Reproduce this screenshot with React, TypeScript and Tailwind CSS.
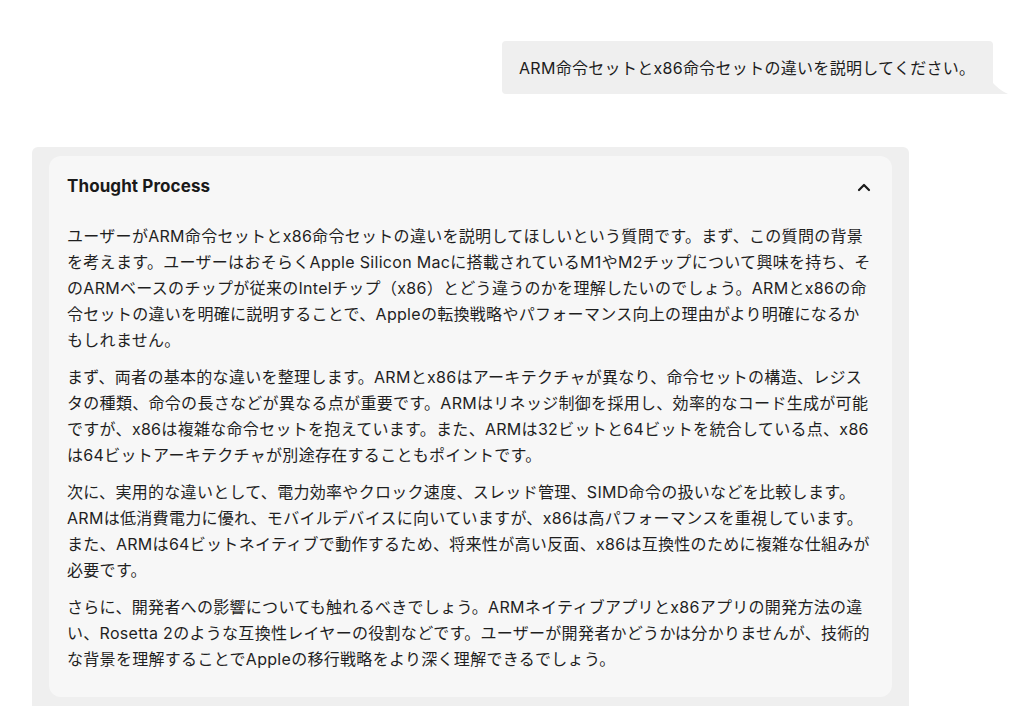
import React from "react";

const paragraphs: string[][] = [
  [
    "ユーザーがARM命令セットとx86命令セットの違いを説明してほしいという質問です。まず、この質問の背景",
    "を考えます。ユーザーはおそらくApple Silicon Macに搭載されているM1やM2チップについて興味を持ち、そ",
    "のARMベースのチップが従来のIntelチップ（x86）とどう違うのかを理解したいのでしょう。ARMとx86の命",
    "令セットの違いを明確に説明することで、Appleの転換戦略やパフォーマンス向上の理由がより明確になるか",
    "もしれません。",
  ],
  [
    "まず、両者の基本的な違いを整理します。ARMとx86はアーキテクチャが異なり、命令セットの構造、レジス",
    "タの種類、命令の長さなどが異なる点が重要です。ARMはリネッジ制御を採用し、効率的なコード生成が可能",
    "ですが、x86は複雑な命令セットを抱えています。また、ARMは32ビットと64ビットを統合している点、x86",
    "は64ビットアーキテクチャが別途存在することもポイントです。",
  ],
  [
    "次に、実用的な違いとして、電力効率やクロック速度、スレッド管理、SIMD命令の扱いなどを比較します。",
    "ARMは低消費電力に優れ、モバイルデバイスに向いていますが、x86は高パフォーマンスを重視しています。",
    "また、ARMは64ビットネイティブで動作するため、将来性が高い反面、x86は互換性のために複雑な仕組みが",
    "必要です。",
  ],
  [
    "さらに、開発者への影響についても触れるべきでしょう。ARMネイティブアプリとx86アプリの開発方法の違",
    "い、Rosetta 2のような互換性レイヤーの役割などです。ユーザーが開発者かどうかは分かりませんが、技術的",
    "な背景を理解することでAppleの移行戦略をより深く理解できるでしょう。",
  ],
];

export default function App() {
  return (
    <div
      className="w-[1024px] h-[706px] overflow-hidden bg-white text-[#1c1c1c]"
      style={{ fontFamily: 'Inter, "Noto Sans CJK JP", sans-serif' }}
    >
      <div className="flex justify-end pt-[41px] pr-[31px]">
        <div className="relative">
          <div className="h-[53px] w-[491px] rounded-[4px] rounded-br-none bg-[#efefef] pl-[17px] flex items-center text-[16px] tracking-[0.3px] text-[#1c1c1c]">
            ARM命令セットとx86命令セットの違いを説明してください。
          </div>
          <svg
            className="absolute right-[-15px] bottom-0"
            width="16"
            height="12"
            viewBox="0 0 16 12"
          >
            <path d="M0 0 C4 4 9 9 16 12 L0 12 Z" fill="#efefef" />
          </svg>
        </div>
      </div>

      <div className="mt-[53px] ml-[32px] w-[877px] rounded-[6px] bg-[#efefef] px-[17px] pt-[9px] pb-[9px] h-[600px]">
        <div className="rounded-[12px] bg-[#f7f7f7] pl-[18px] pr-[20px] pt-[19px] pb-[25px]">
          <div className="flex items-center justify-between h-[24px]">
            <div className="text-[17px] font-bold tracking-[0.1px] text-[#1a1a1a]">Thought Process</div>
            <svg width="14" height="10" viewBox="0 0 14 10" className="mr-[1px]">
              <path
                d="M2 8 L7 3 L12 8"
                fill="none"
                stroke="#1a1a1a"
                strokeWidth="2.2"
                strokeLinecap="round"
                strokeLinejoin="round"
              />
            </svg>
          </div>
          <div className="mt-[24px] flex flex-col gap-[11px] text-[16px] leading-[26px] tracking-[0.3px] text-[#1f1f1f]">
            {paragraphs.map((p, i) => (
              <div key={i}>
                {p.map((line, j) => (
                  <div key={j} className="whitespace-nowrap">
                    {line}
                  </div>
                ))}
              </div>
            ))}
          </div>
        </div>
      </div>
    </div>
  );
}
